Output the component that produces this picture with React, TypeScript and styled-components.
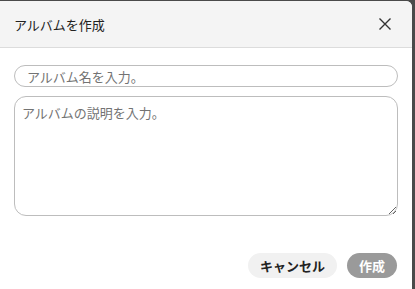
import React from "react";
import styled, { createGlobalStyle } from "styled-components";

const GlobalStyle = createGlobalStyle`
  html, body {
    margin: 0;
    padding: 0;
    background: #4a4a4a;
  }
  body {
    font-family: "Noto Sans CJK JP", "Noto Sans", sans-serif;
  }
`;

const Dialog = styled.div`
  width: 412px;
  height: 289px;
  margin-top: 1px;
  background: #fff;
  border-top-right-radius: 6px;
  overflow: hidden;
  display: flex;
  flex-direction: column;
`;

const Header = styled.div`
  height: 46px;
  background: #f4f4f4;
  border-bottom: 1px solid #dcdcdc;
  display: flex;
  align-items: center;
  justify-content: space-between;
  padding: 0 20px 0 14px;
  flex-shrink: 0;
`;

const Title = styled.h2`
  margin: 0;
  font-size: 13px;
  font-weight: 400;
  color: #222;
`;

const CloseButton = styled.button`
  border: 0;
  background: none;
  padding: 0;
  width: 14px;
  height: 14px;
  display: flex;
  cursor: pointer;
`;

const Body = styled.div`
  padding: 17px 14px 0;
  display: flex;
  flex-direction: column;
  gap: 9px;
`;

const NameInput = styled.input`
  box-sizing: border-box;
  width: 100%;
  height: 22px;
  border: 1px solid #bdbdbd;
  border-radius: 11px;
  padding: 0 12px;
  font-family: inherit;
  font-size: 13px;
  outline: none;
  &::placeholder {
    color: #737373;
  }
`;

const DescInput = styled.textarea`
  box-sizing: border-box;
  width: 100%;
  height: 120px;
  border: 1px solid #bdbdbd;
  border-radius: 12px;
  padding: 6px 7px;
  font-family: inherit;
  font-size: 13px;
  outline: none;
  resize: vertical;
  &::placeholder {
    color: #737373;
  }
`;

const Footer = styled.div`
  margin-top: auto;
  display: flex;
  justify-content: flex-end;
  gap: 10px;
  padding: 0 15px 12px;
`;

const Button = styled.button<{ $primary?: boolean }>`
  height: 25px;
  border: 0;
  border-radius: 13px;
  padding: 0 12px;
  font-family: inherit;
  font-size: 13px;
  font-weight: 700;
  background: ${(p) => (p.$primary ? "#9a9a9a" : "#f1f1f1")};
  color: ${(p) => (p.$primary ? "#fff" : "#222")};
  cursor: pointer;
`;

const App = (): JSX.Element => {
  return (
    <>
      <GlobalStyle />
      <Dialog>
        <Header>
          <Title>アルバムを作成</Title>
          <CloseButton aria-label="閉じる">
            <svg width="14" height="14" viewBox="0 0 14 14">
              <path d="M1.5 1.5 L12.5 12.5 M12.5 1.5 L1.5 12.5" stroke="#333" strokeWidth="1.4" />
            </svg>
          </CloseButton>
        </Header>
        <Body>
          <NameInput placeholder="アルバム名を入力。" />
          <DescInput placeholder="アルバムの説明を入力。" />
        </Body>
        <Footer>
          <Button>キャンセル</Button>
          <Button $primary>作成</Button>
        </Footer>
      </Dialog>
    </>
  );
};

export default App;
